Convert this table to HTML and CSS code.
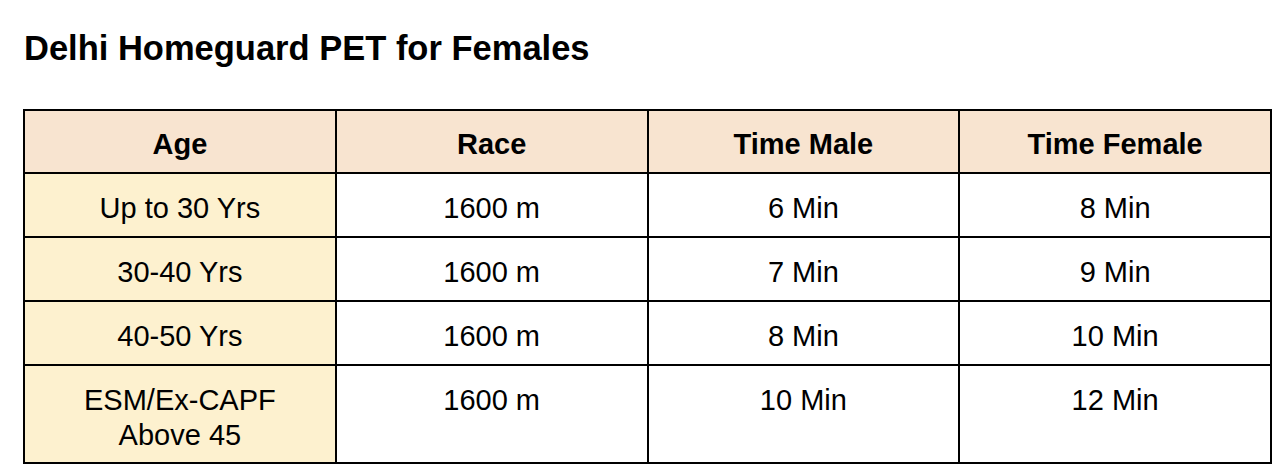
FILE: index.html
```html
<!DOCTYPE html>
<html>
<head>
<meta charset="utf-8">
<link rel="stylesheet" href="styles.css">
</head>
<body>
<h2 class="title">Delhi Homeguard PET for Females</h2>
<table class="pet">
  <thead>
    <tr class="head-row">
      <th>Age</th>
      <th>Race</th>
      <th>Time Male</th>
      <th>Time Female</th>
    </tr>
  </thead>
  <tbody>
    <tr class="row">
      <td class="age">Up to 30 Yrs</td>
      <td>1600 m</td>
      <td>6 Min</td>
      <td>8 Min</td>
    </tr>
    <tr class="row">
      <td class="age">30-40 Yrs</td>
      <td>1600 m</td>
      <td>7 Min</td>
      <td>9 Min</td>
    </tr>
    <tr class="row">
      <td class="age">40-50 Yrs</td>
      <td>1600 m</td>
      <td>8 Min</td>
      <td>10 Min</td>
    </tr>
    <tr class="row tall">
      <td class="age">ESM/Ex-CAPF<br>Above 45</td>
      <td>1600 m</td>
      <td>10 Min</td>
      <td>12 Min</td>
    </tr>
  </tbody>
</table>
</body>
</html>
```
FILE: styles.css
```css
html, body {
  margin: 0;
  padding: 0;
  background: #ffffff;
}
body {
  font-family: "Liberation Sans", Arial, sans-serif;
  color: #000000;
}
.title {
  margin: 0;
  padding: 29px 0 0 24px;
  font-size: 34.5px;
  line-height: 38px;
  font-weight: bold;
}
.pet {
  margin: 42px 0 0 23px;
  border-collapse: collapse;
  width: 1249px;
  table-layout: fixed;
  font-size: 29px;
  line-height: 35px;
}
.pet th, .pet td {
  border: 2px solid #000000;
  text-align: center;
  vertical-align: top;
  padding: 17px 8px 0 8px;
}
.pet th {
  background: #f8e4d0;
  font-weight: bold;
  height: 45px;
  padding-top: 16px;
}
.row td {
  height: 45px;
}
.row.tall td {
  height: 79px;
}
.pet td.age {
  background: #fdf1cf;
}
```
